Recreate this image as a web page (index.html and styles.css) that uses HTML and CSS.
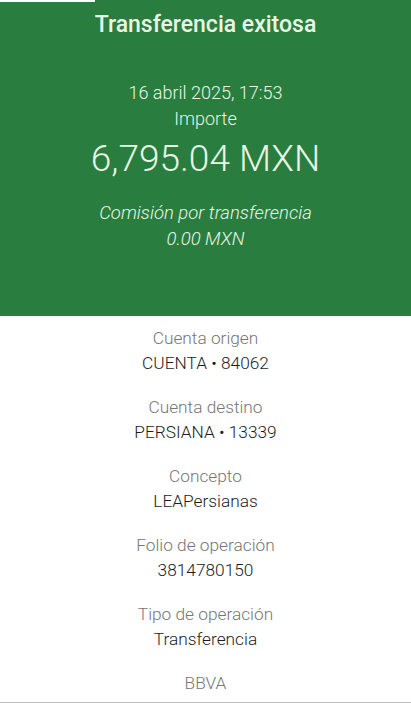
FILE: index.html
```html
<!DOCTYPE html>
<html lang="es">
  <head>
    <meta charset="UTF-8" />
    <meta name="viewport" content="width=device-width, initial-scale=1.0" />
    <title>Transferencia exitosa</title>
    <link rel="stylesheet" href="styles.css">
  </head>
  <body>
    <div class="header">
      <div class="status-strip"></div>
      <h1 class="title">Transferencia exitosa</h1>
      <p class="date">16 abril 2025, 17:53</p>
      <p class="amount-label">Importe</p>
      <p class="amount">6,795.04 MXN</p>
      <p class="fee">Comisión por transferencia</p>
      <p class="fee fee-value">0.00 MXN</p>
    </div>

    <div class="details">
      <div class="item">
        <p class="label">Cuenta origen</p>
        <p class="value">CUENTA • 84062</p>
      </div>
      <div class="item">
        <p class="label">Cuenta destino</p>
        <p class="value">PERSIANA • 13339</p>
      </div>
      <div class="item">
        <p class="label">Concepto</p>
        <p class="value">LEAPersianas</p>
      </div>
      <div class="item">
        <p class="label">Folio de operación</p>
        <p class="value">3814780150</p>
      </div>
      <div class="item">
        <p class="label">Tipo de operación</p>
        <p class="value">Transferencia</p>
      </div>
      <div class="item">
        <p class="label">BBVA</p>
      </div>
    </div>
    <div class="bottom-line"></div>
  </body>
</html>
```

FILE: styles.css
```css
body {
  font-family: Roboto, "Liberation Sans", sans-serif;
  margin: 0;
  padding: 0;
  background: #fff;
  height: 703px;
  overflow: hidden;
}

p {
  margin: 0;
}

.header {
  background-color: #297d3f;
  color: #e9f6e6;
  text-align: center;
  padding-bottom: 64px;
}

.status-strip {
  width: 95px;
  height: 2px;
  background: #fff;
}

.title {
  margin: 8px 0 0;
  font-size: 23px;
  font-weight: 500;
  line-height: 30px;
}

.date,
.amount-label {
  font-size: 18px;
  font-weight: 300;
  line-height: 26px;
}

.date {
  margin-top: 40px;
}

.amount {
  margin-top: 5px;
  font-size: 37px;
  font-weight: 300;
  line-height: 44px;
}

.fee {
  margin-top: 19px;
  font-size: 18.5px;
  font-weight: 300;
  font-style: italic;
  line-height: 26px;
}

.fee-value {
  margin-top: 0;
}

.details {
  text-align: center;
  padding-top: 10px;
  display: flex;
  flex-direction: column;
  gap: 19px;
}

.label,
.value {
  font-size: 17.3px;
  font-weight: 300;
  line-height: 25px;
}

.label {
  color: #767676;
}

.value {
  color: #1c1c1c;
}

.bottom-line {
  margin-top: 6px;
  border-top: 2px solid #bdbdbd;
}
```
